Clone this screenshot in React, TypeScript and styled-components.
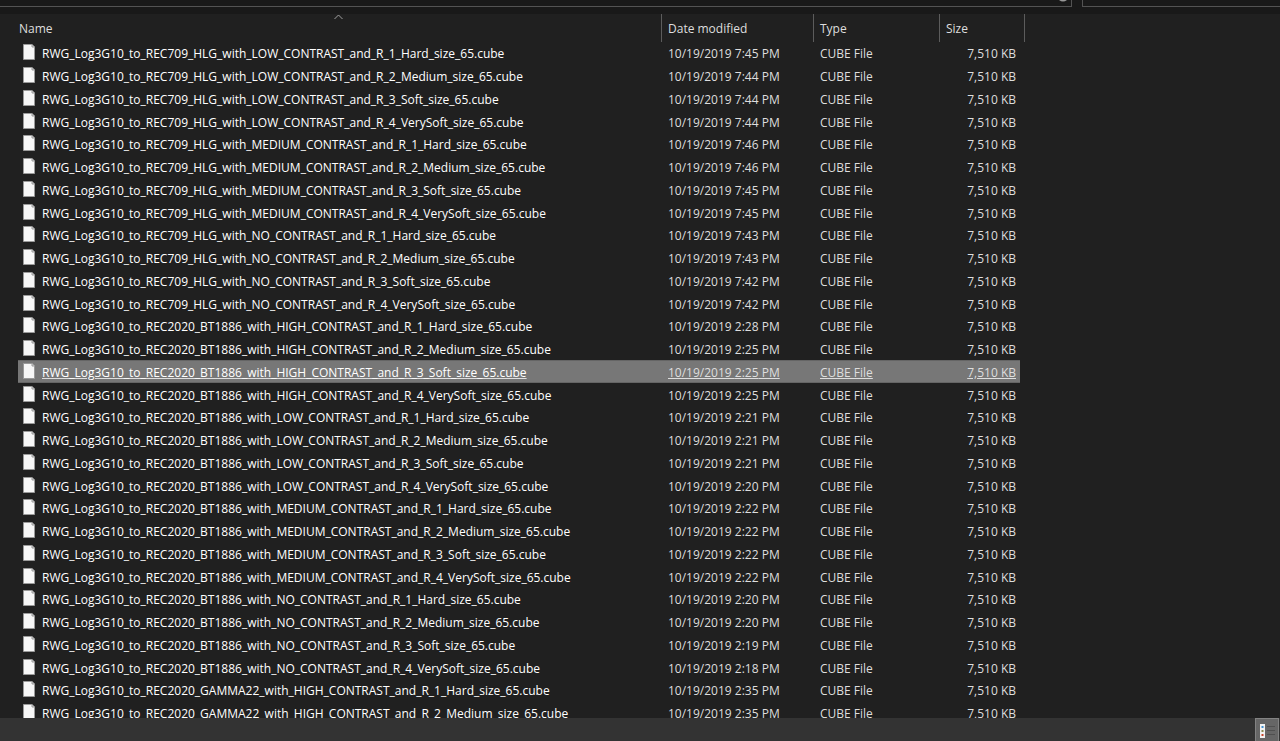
import React from "react";
import styled, { createGlobalStyle } from "styled-components";

const Global = createGlobalStyle`
  * { box-sizing: border-box; }
  html, body { margin: 0; background: #202020; }
  body { font-family: "Open Sans", "Noto Sans", sans-serif; font-size: 12px; color: #dedede; }
`;

const Window = styled.div`
  display: flex;
  flex-direction: column;
  height: 100vh;
  overflow: hidden;
`;

const NavBar = styled.div`
  display: flex;
  gap: 10px;
  height: 14px;
  flex: none;
  padding-bottom: 7px;
  background: #191919;
`;

const AddressBar = styled.div`
  flex: 1;
  display: flex;
  justify-content: flex-end;
  padding-right: 2px;
  border: 1px solid #535353;
  border-width: 0 1px 1px 0;
`;

const SearchBox = styled.input`
  width: 198px;
  height: 7px;
  padding: 0;
  border: 1px solid #535353;
  border-width: 0 0 1px 1px;
  background: transparent;
  color: inherit;
  outline: none;
`;

const FileView = styled.main`
  flex: 1;
  min-height: 0;
  overflow: hidden;
  padding-left: 18px;
`;

const FileTable = styled.table`
  table-layout: fixed;
  width: 1007px;
  border-collapse: separate;
  border-spacing: 0;
  white-space: nowrap;
`;

const Heading = styled.th`
  position: relative;
  height: 28px;
  padding: 2px 6px 0;
  border-right: 1px solid #5c5c5c;
  text-align: left;
  font-weight: 400;
  line-height: 26px;
`;

const NameHeading = styled(Heading)`
  padding-left: 1px;
`;

const SortMark = styled.svg`
  position: absolute;
  top: 0;
  left: 50%;
  margin-left: -6px;
`;

const Row = styled.tr<{ $selected?: boolean }>`
  height: 23px;
  text-decoration: ${(p) => (p.$selected ? "underline" : "none")};
  &:nth-child(4n + 1) { height: 22px; }
  td:not(:empty) {
    background: ${(p) => (p.$selected ? "#777777" : "transparent")};
    box-shadow: ${(p) => (p.$selected ? "inset 0 1px #656565, inset 0 -1px #656565" : "none")};
  }
`;

const Cell = styled.td`
  padding: 2px 6px 0;
  line-height: 20px;
`;

const NameCell = styled(Cell)`
  padding-left: 5px;
  color: #ffffff;
`;

const FileName = styled.div`
  display: flex;
  gap: 7px;
`;

const SizeCell = styled(Cell)`
  padding-right: 4px;
  text-align: right;
`;

const StatusBar = styled.footer`
  flex: none;
  display: flex;
  justify-content: flex-end;
  height: 23px;
  padding-right: 1px;
  background: #333333;
`;

const ViewButton = styled.button`
  width: 24px;
  height: 24px;
  padding: 0;
  border: 1px solid #838383;
  background: #666666;
`;

const FileIcon = () => (
  <svg width="12" height="18" viewBox="0 0 12 18" aria-hidden="true">
    <path d="M.5 .5h8.500l2.500 2.500v12.500h-11z" fill="#f7f7f7" stroke="#9a9a9a" />
    <path d="M9 .5v2.500h2.500" fill="#d0d0d0" stroke="#9a9a9a" />
  </svg>
);

const contrast = (gamut: string, level: string, times: string[]) =>
  ["1_Hard", "2_Medium", "3_Soft", "4_VerySoft"].slice(0, times.length).map((r, i) => ({
    name: `RWG_Log3G10_to_${gamut}_with_${level}_CONTRAST_and_R_${r}_size_65.cube`,
    time: times[i],
  }));

const files = [
  ...contrast("REC709_HLG", "LOW", ["7:45", "7:44", "7:44", "7:44"]),
  ...contrast("REC709_HLG", "MEDIUM", ["7:46", "7:46", "7:45", "7:45"]),
  ...contrast("REC709_HLG", "NO", ["7:43", "7:43", "7:42", "7:42"]),
  ...contrast("REC2020_BT1886", "HIGH", ["2:28", "2:25", "2:25", "2:25"]),
  ...contrast("REC2020_BT1886", "LOW", ["2:21", "2:21", "2:21", "2:20"]),
  ...contrast("REC2020_BT1886", "MEDIUM", ["2:22", "2:22", "2:22", "2:22"]),
  ...contrast("REC2020_BT1886", "NO", ["2:20", "2:20", "2:19", "2:18"]),
  ...contrast("REC2020_GAMMA22", "HIGH", ["2:35", "2:35"]),
];

export default function App() {
  return (
    <Window>
      <Global />
      <NavBar>
        <AddressBar>
          <svg width="12" height="6" viewBox="0 0 12 6" aria-hidden="true">
            <path d="M2 0h8Q6 3 2 0" fill="#999" />
          </svg>
        </AddressBar>
        <SearchBox aria-label="Search" />
      </NavBar>
      <FileView>
        <FileTable>
          <colgroup>
            <col style={{ width: 644 }} />
            <col style={{ width: 152 }} />
            <col style={{ width: 126 }} />
            <col style={{ width: 80 }} />
            <col style={{ width: 5 }} />
          </colgroup>
          <thead>
            <tr>
              <NameHeading aria-sort="ascending">
                Name
                <SortMark width="9" height="6" viewBox="0 0 9 6" aria-hidden="true">
                  <path d="M.5 5l4-4 4 4" fill="none" stroke="#a0a0a0" />
                </SortMark>
              </NameHeading>
              <Heading>Date modified</Heading>
              <Heading>Type</Heading>
              <Heading colSpan={2}>Size</Heading>
            </tr>
          </thead>
          <tbody>
            {files.map((f, i) => (
              <Row key={f.name} $selected={i === 14}>
                <NameCell>
                  <FileName>
                    <FileIcon />
                    <span>{f.name}</span>
                  </FileName>
                </NameCell>
                <Cell>10/19/2019 {f.time} PM</Cell>
                <Cell>CUBE File</Cell>
                <SizeCell>7,510 KB</SizeCell>
                <td></td>
              </Row>
            ))}
          </tbody>
        </FileTable>
      </FileView>
      <StatusBar>
        <ViewButton aria-label="Details view">
          <svg width="22" height="22" viewBox="0 0 22 22" aria-hidden="true">
            <path d="M4 5h5v14H4z" fill="#f2f2f2" />
            <path d="M5.500 7h2v2h-2z" fill="#3f8fd0" />
            <path d="M5.500 11h2v2h-2z" fill="#8a8a50" />
            <path d="M5.500 15h2v2h-2z" fill="#c8442c" />
            <path d="M11 7.500h8M11 11.500h8M11 15.500h8" stroke="#505050" />
          </svg>
        </ViewButton>
      </StatusBar>
    </Window>
  );
}
